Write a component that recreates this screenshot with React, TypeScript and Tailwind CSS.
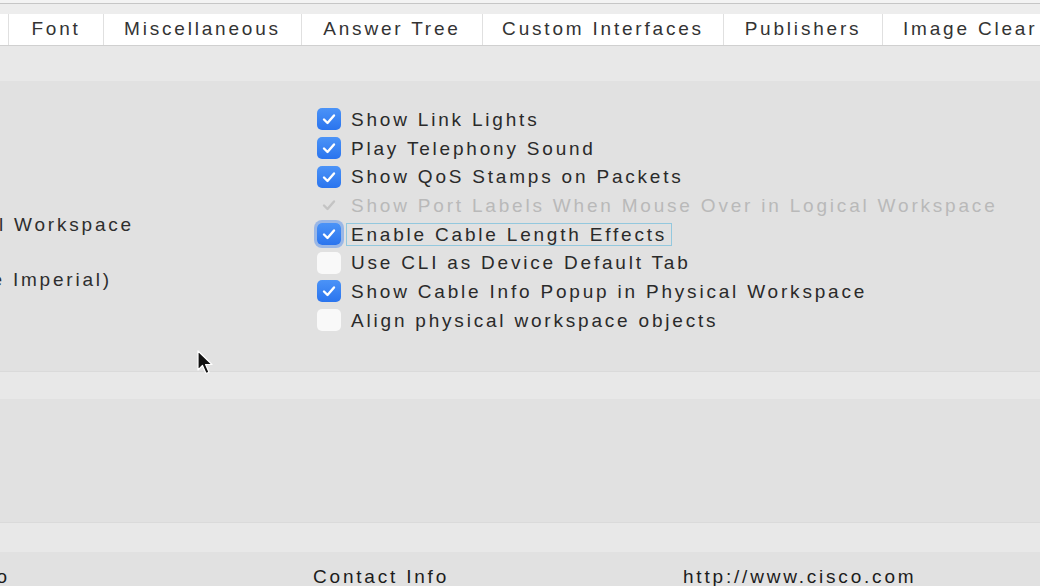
import React from 'react';

const tabs = [
  { label: 'Font', w: 'w-[95px] justify-center' },
  { label: 'Miscellaneous', w: 'w-[198px] justify-center' },
  { label: 'Answer Tree', w: 'w-[181px] justify-center' },
  { label: 'Custom Interfaces', w: 'w-[241px] justify-center' },
  { label: 'Publishers', w: 'w-[159px] justify-center' },
  { label: 'Image Clear', w: 'w-[200px] pl-[20px]' },
];

type Opt = { label: string; state: 'on' | 'off' | 'disabled' | 'focus' };

const options: Opt[] = [
  { label: 'Show Link Lights', state: 'on' },
  { label: 'Play Telephony Sound', state: 'on' },
  { label: 'Show QoS Stamps on Packets', state: 'on' },
  { label: 'Show Port Labels When Mouse Over in Logical Workspace', state: 'disabled' },
  { label: 'Enable Cable Length Effects', state: 'focus' },
  { label: 'Use CLI as Device Default Tab', state: 'off' },
  { label: 'Show Cable Info Popup in Physical Workspace', state: 'on' },
  { label: 'Align physical workspace objects', state: 'off' },
];

function Check({ color = 'white' }: { color?: string }) {
  return (
    <svg width="16" height="14" viewBox="0 0 16 14" fill="none">
      <path d="M3 7.5 L6.5 11 L13 3.5" stroke={color} strokeWidth="2.4" strokeLinecap="round" strokeLinejoin="round" />
    </svg>
  );
}

function Box({ state }: { state: Opt['state'] }) {
  if (state === 'disabled') {
    return (
      <div className="w-[24px] h-[22px] flex items-center justify-center">
        <Check color="#c4c4c4" />
      </div>
    );
  }
  if (state === 'off') {
    return <div className="w-[24px] h-[22px] rounded-[5px] bg-[#f9f9f9]" />;
  }
  return (
    <div
      className={`w-[24px] h-[22px] rounded-[5px] bg-gradient-to-b from-[#4b93f7] to-[#2a74ee] flex items-center justify-center ${
        state === 'focus' ? 'shadow-[0_0_0_3px_rgba(96,150,235,0.55)]' : ''
      }`}
    >
      <Check />
    </div>
  );
}

function Cursor() {
  return (
    <svg width="18" height="26" viewBox="0 0 18 26" className="absolute left-[197px] top-[350px]">
      <path d="M1 1 L1 20 L5.5 15.5 L9 23.5 L12 22.2 L8.6 14.5 L15 14.5 Z" fill="#111" stroke="#fff" strokeWidth="1.2" strokeLinejoin="round" />
    </svg>
  );
}

export default function App() {
  return (
    <div className="relative w-[1040px] h-[586px] overflow-hidden bg-[#e1e1e1] font-['Liberation_Sans',Arial,sans-serif] text-[19px] tracking-[2.8px]">
      <div className="h-[3px] bg-[#f3f3f3]" />
      <div className="h-px bg-[#c6c6c6]" />
      <div className="h-[10px] bg-[#ededed]" />

      <div className="flex h-[32px] bg-white border-b border-[#d0d0d0] text-[#333]">
        <div className="w-[8px] shrink-0" />
        {tabs.map((t) => (
          <div
            key={t.label}
            className={`${t.w} shrink-0 border-l border-[#e0e0e0] flex items-center whitespace-nowrap`}
          >
            {t.label}
          </div>
        ))}
      </div>

      <div className="h-[35px] bg-[#e8e8e8]" />

      <div className="h-[290px] flex">
        <div className="w-[317px] shrink-0 text-[#2e2e2e]">
          <div className="w-[134px] h-[28px] mt-[130px] flex justify-end items-center overflow-hidden whitespace-nowrap">
            Always Show Port Labels in Logical Workspace
          </div>
          <div className="w-[112px] h-[28px] mt-[27px] flex justify-end items-center overflow-hidden whitespace-nowrap">
            Use Metric Units (Uncheck to use Imperial)
          </div>
        </div>
        <div className="pt-[24px]">
          {options.map((o) => (
            <div key={o.label} className="h-[28.7px] flex items-center whitespace-nowrap">
              <Box state={o.state} />
              <span
                className={`ml-[5px] px-[4px] leading-[21px] border ${
                  o.state === 'focus' ? 'border-[#93c8de]' : 'border-transparent'
                } ${o.state === 'disabled' ? 'text-[#b9b9b9]' : 'text-[#2a2a2a]'}`}
              >
                {o.label}
              </span>
            </div>
          ))}
        </div>
      </div>

      <div className="h-[28px] bg-[#e8e8e8] border-t border-[#dadada]" />
      <div className="h-[123px]" />
      <div className="h-[30px] bg-[#e8e8e8] border-t border-[#dadada]" />

      <div className="flex pt-[14px] leading-[21px] text-[#1c1c1c] whitespace-nowrap">
        <div className="w-[10px] flex justify-end overflow-hidden">Info</div>
        <div className="ml-[303px] w-[370px]">Contact Info</div>
        <div>http://www.cisco.com</div>
      </div>

      <Cursor />
    </div>
  );
}
